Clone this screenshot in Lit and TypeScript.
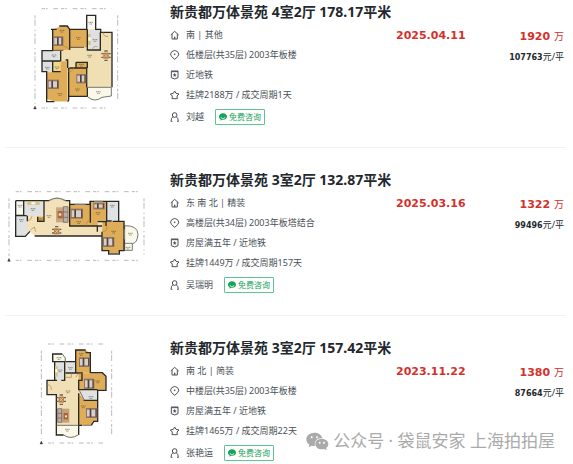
import { LitElement, html, svg, css } from "lit";
import { customElement, property } from "lit/decorators.js";

interface Deal {
  title: string;
  facing: string;
  floor: string;
  tags: string;
  listing: string;
  agent: string;
  date: string;
  total: string;
  unit: string;
  plan: "a" | "b" | "c";
}

const deals: Deal[] = [
  { title: "新贵都万体景苑 4室2厅 178.17平米", facing: "南 | 其他", floor: "低楼层(共35层) 2003年板楼", tags: "近地铁", listing: "挂牌2188万 / 成交周期1天", agent: "刘越", date: "2025.04.11", total: "1920", unit: "107763", plan: "a" },
  { title: "新贵都万体景苑 3室2厅 132.87平米", facing: "东 南 北 | 精装", floor: "高楼层(共34层) 2003年板塔结合", tags: "房屋满五年 / 近地铁", listing: "挂牌1449万 / 成交周期157天", agent: "吴瑞明", date: "2025.03.16", total: "1322", unit: "99496", plan: "b" },
  { title: "新贵都万体景苑 3室2厅 157.42平米", facing: "南 北 | 简装", floor: "中楼层(共35层) 2003年板楼", tags: "房屋满五年 / 近地铁", listing: "挂牌1465万 / 成交周期22天", agent: "张艳运", date: "2023.11.22", total: "1380", unit: "87664", plan: "c" },
];

const icons = {
  home: svg`<path d="M2 15L14 4L26 15M6 12V27H22V12"/><path d="M14 27V20" stroke-width="4"/>`,
  pin: svg`<path d="M14 28L5 20A12 11 0 1 1 23 20Z"/><circle cx="14" cy="13" r="2.5" fill="#4a5057" stroke="none"/>`,
  badge: svg`<path d="M4 3H24V23L14 27L4 23Z"/><path d="M4 5H24"/><path d="M14 9l1.8 3.6 4 .6-2.9 2.8.7 4-3.6-1.9-3.6 1.9.7-4-2.9-2.8 4-.6z" fill="#4a5057" stroke="none"/>`,
  star: svg`<path d="M14 3L18 10L27 12L21 18L22 26H6L7 18L1 12L10 10Z"/>`,
  user: svg`<circle cx="14" cy="9" r="7"/><path d="M9 14Q3 18 3 28M19 14Q25 18 25 28M3 28H7M21 28H25"/>`,
};

const chat = svg`<path d="M12 1C5 1 0 5 0 11c0 4 2 6 5 8l-1 4 5-3h3c7 0 12-4 12-9S19 1 12 1z" fill="#16a35a"/><path d="M6 12a6 5 0 0 0 12 0" fill="none" stroke="#fff" stroke-width="2"/>`;

const bed = (x: number, y: number, w = 28, h = 30) => svg`
  <rect x=${x} y=${y} width=${w} height=${h} fill="#8c7567"/>
  <rect x=${x + 3} y=${y + 5} width=${w - 7} height=${h - 10} fill="#d9cfc8"/>
  <rect x=${x + 11} y=${y + 3} width="5" height=${h - 6} fill="#4c403c"/>
  <rect x=${x + w - 6} y=${y + 3} width="4" height=${h - 6} fill="#5d4d46"/>`;

const mark = (x: number, y: number) => svg`
  <path d="M${x - 7} ${y}h14M${x - 4} ${y + 5}h8" stroke="#4b4335" stroke-width="3" stroke-dasharray="4 1" opacity=".55"/>`;

const table = (x: number, y: number) => svg`
  <rect x=${x - 8} y=${y - 9} width="16" height="18" fill="#b77b42"/>
  <path d="M${x - 14} ${y - 6}h6m16 0h6M${x - 14} ${y + 5}h6m16 0h6M${x - 5} ${y - 14}h10M${x - 5} ${y + 14}h10" stroke="#6c6259" stroke-width="4"/>
  <path d="M${x - 5} ${y - 5}l10 10m0-10l-10 10" stroke="#ece3d3" stroke-width="2"/>`;

const rulers = (x1: number, y1: number, x2: number, y2: number) => svg`
  <path d="M${x1 + 20} ${y1}H${x2 - 18}M${x1 + 20} ${y2}H${x2 - 18}" stroke="#bbb" stroke-width="3" stroke-dasharray="10 3 5 17 14 9"/>
  <path d="M${x1} ${y1 + 20}V${y2 - 12}M${x2} ${y1 + 20}V${y2 - 18}" stroke="#bbb" stroke-width="3" stroke-dasharray="9 4 18 12 4 8"/>
  <path d="M${x1} ${y2 - 6}l-4 9h8z" fill="#333" stroke="#333"/>`;

const plans = {
  a: { box: "15 6 465 330", art: svg`
    ${rulers(105, 26, 353, 324)}
    <path d="M153 88H170L178 77H202L209 88H260V46H287V88H302V97H336V262H334V288Q320 290 306 292Q284 310 263 290H259V289H206V300L203 305H163L140 297V215H126V152H158V88Z" fill="#f0dfb3"/>
    <path d="M158 90L180 79H202L208 88V150H158ZM209 90H261V142H209ZM141 217H158V184H202V304H163L141 297ZM206 204H260V288H206Z" fill="#dfac58"/>
    <path d="M228 187h34v17h-34z" fill="#dfac58"/>
    <path d="M126 153H182V183H158V215H126ZM262 89H301V150H262Z" fill="#dfe0e1"/>
    <path d="M262 47H286V88H262Z" fill="#fbfaf0"/>
    <path d="M159 185h23v30h-23z" fill="#f0d88f"/>
    <path d="M262 262H334V288L306 292Q284 309 262 289Z" fill="#faf9e9"/>
    <path d="M153 88H170M178 78H202L209 88H260V46H287V88H302V97H336V262M262 262V289H206V300L203 305M163 305H140V215H126V152H158V88M209 88V150M262 88V150H301V97M206 204V289M208 204H260V262M228 187H262V204M228 187V204M126 183H182M158 184V215H182M182 152V183M197 180H203V204" fill="none" stroke="#292926" stroke-width="4"/>
    <path d="M209 142H252M158 151H190" stroke="#5e503a" stroke-width="3"/>
    <path d="M262 262H334V288L306 292Q284 309 262 290" fill="none" stroke="#777" stroke-width="3"/>
    <path d="M190 140q12-4 18 10M276 150q4-14 16-10M205 214q14 2 16-10M310 97q0 15 14 12" fill="none" stroke="#b7813a" stroke-width="2"/>
    ${bed(160, 109, 30, 29)}${bed(143, 239, 34, 28)}${bed(229, 222, 30, 28)}
    ${table(318, 167)}
    <rect x="264" y="102" width="8" height="33" fill="#d8c37b"/><rect x="265" y="112" width="7" height="10" fill="#fff"/>
    ${mark(186, 91)}${mark(235, 113)}${mark(285, 119)}${mark(162, 165)}${mark(142, 202)}${mark(171, 201)}${mark(244, 193)}${mark(269, 166)}${mark(180, 281)}${mark(232, 267)}${mark(295, 275)}${mark(272, 67)}` },
  b: { box: "15 0 465 330", art: svg`
    ${rulers(27, 65, 432, 271)}
    <path d="M47 92H147Q171 77 196 92H209V104H270V95H356V154H373V242H358V252H326V242H306V198H104L90 184L76 199H47Z" fill="#f2e1b9"/>
    <path d="M210 104H270V168H210ZM271 96H319V155H293V168H271ZM307 155H372V241H357V251H327V241H307Z" fill="#dfac58"/>
    <path d="M72 94H131V137H72ZM48 137H82V182L76 198H48ZM322 97H355V153H322Z" fill="#dfe1e2"/>
    <path d="M48 94H70V136H48Z" fill="#fbfaf0"/>
    <path d="M113 140H132V154H113Z" fill="#d9a552"/>
    <path d="M374 167Q413 166 414 193Q412 219 397 221V241H374Z" fill="#faf9e9" stroke="#777" stroke-width="3"/>
    <path d="M374 220H398" stroke="#777" stroke-width="3"/>
    <path d="M47 92H147M47 92V199H76L90 184M104 198H306V242H326V252H358V242H372V154H356V94H270V103H209V92H196M71 92V136H48M132 93V154H113V140M82 137V154M48 137H80M209 92V168H292V185M271 96V158M320 96V153H335M293 155H318V168M338 154H372V165M306 185V242M293 168H306" fill="none" stroke="#292926" stroke-width="4"/>
    <path d="M147 92Q171 77 196 92" fill="none" stroke="#777" stroke-width="4"/>
    <path d="M224 103H257M282 94H309M373 178V208M327 252H358" stroke="#8c8c86" stroke-width="3"/>
    <path d="M91 180l12-9 4 14M258 168q0-16 12-14M308 184q13 2 13-14M82 153q12-2 14-14" fill="none" stroke="#b7813a" stroke-width="2"/>
    ${bed(212, 116, 37, 30)}${bed(280, 98, 34, 20)}${bed(309, 201, 34, 30)}
    <rect x="168" y="112" width="37" height="45" fill="#c5a789"/>
    <rect x="173" y="123" width="15" height="22" fill="#b0672e"/><rect x="176" y="130" width="8" height="7" fill="#f1e4c5"/>
    <path d="M190 110H204V157H190Z" fill="#bbb0a7" stroke="#705a50" stroke-width="2"/>
    <path d="M190 126H204M190 142H204" stroke="#705a50" stroke-width="2"/>
    ${table(170, 184)}
    <rect x="82" y="95" width="37" height="10" fill="#d8c37b"/><rect x="94" y="97" width="12" height="6" fill="#fff"/>
    ${mark(60, 106)}${mark(99, 116)}${mark(64, 149)}${mark(121, 147)}${mark(147, 137)}${mark(236, 155)}${mark(294, 128)}${mark(337, 106)}${mark(341, 184)}${mark(391, 190)}${mark(384, 232)}` },
  c: { box: "15 24 465 330", art: svg`
    ${rulers(124, 42, 335, 339)}
    <path d="M158 72H187L196 85V94H226V59H257V68H271V128H307L318 139V180H294V274H276V285H236V314Q211 330 191 315H169V194H141V151H163V95H158Z" fill="#f1e0b6"/>
    <path d="M227 61H257L270 69V128H227ZM236 130H306L317 140V179H236ZM236 188L250 212H292V274H276V285H236Z" fill="#dfac58"/>
    <path d="M164 95H192V151H164ZM198 95H226V129H198ZM239 182H292V211H253Z" fill="#dfe1e2"/>
    <path d="M160 73H187L194 84V94H160ZM170 286H235V315Q211 329 191 315H170Z" fill="#faf9e9"/>
    <path d="M187 72H158V95H164V151H141V194H169V315H191M236 315V190M236 286H246M274 286L281 274H293V181H318V139L307 128H271V68H257M257 60H227V129H246V151H236V179H293M164 95H194V151H184M197 129H226M197 95H226M141 151H171M250 211H292" fill="none" stroke="#292926" stroke-width="4"/>
    <path d="M170 286H235M191 315Q211 330 236 314M187 72L196 84V94M257 60V68M238 181L253 211M247 286H274" fill="none" stroke="#77736a" stroke-width="3"/>
    <path d="M142 164q13 0 12 16M236 200q12-2 14 12M228 142q4-13 17-12M197 142h17v-12" fill="none" stroke="#b7813a" stroke-width="2"/>
    ${bed(237, 82, 33, 29)}${bed(252, 146, 31, 31)}${bed(258, 234, 34, 30)}
    ${table(184, 209)}
    <rect x="181" y="236" width="27" height="42" fill="#c6a17d"/>
    <rect x="191" y="249" width="13" height="19" fill="#aa662f"/><rect x="195" y="256" width="6" height="6" fill="#f1e4c5"/>
    <path d="M173 236H185V277H173Z" fill="#bbb0a7" stroke="#705a50" stroke-width="2"/>
    <path d="M173 250H185M173 264H185" stroke="#705a50" stroke-width="2"/>
    <rect x="165" y="108" width="8" height="32" fill="#d8c37b"/><rect x="166" y="117" width="6" height="10" fill="#fff"/>
    ${mark(177, 83)}${mark(180, 120)}${mark(211, 113)}${mark(244, 71)}${mark(293, 153)}${mark(273, 200)}${mark(204, 183)}${mark(250, 228)}${mark(202, 298)}` },
};

@customElement("deal-row")
class DealRow extends LitElement {
  @property({ attribute: false }) deal!: Deal;

  static styles = css`
    :host {
      display: grid;
      grid-template-columns: 165px minmax(226px, 1fr) 70px 98px;
      align-items: start;
      font: 9px/20px "Noto Sans", "Noto Sans CJK SC", sans-serif;
      color: #4a5057;
      white-space: nowrap;
    }
    .plan { display: block; width: 155px; height: 110px; }
    .title { margin: 0; font-size: 14px; line-height: 20px; font-weight: 700; }
    .title a { color: #23282c; text-decoration: none; }
    .facts { list-style: none; margin: 3px 0 1px; padding: 0; }
    .fact { display: flex; align-items: center; gap: 6px; }
    .icon { width: 10px; height: 10px; flex: none; fill: none; stroke: #4a5057; stroke-width: 3; }
    .agent { display: flex; align-items: center; gap: 6px; height: 22px; }
    .ask {
      display: flex;
      align-items: center;
      gap: 2px;
      height: 16px;
      margin-left: 5px;
      padding: 0 3px;
      border: 1px solid #5cc592;
      border-radius: 1px;
      background: #fff;
      color: #16a35a;
      font: 8px/14px "Noto Sans", "Noto Sans CJK SC", sans-serif;
    }
    .bubble { width: 8px; height: 8px; }
    .date, .price { padding-top: 24px; }
    .date, .total { color: #d3312b; font: 700 11px/20px "DejaVu Sans", sans-serif; }
    .price { text-align: right; }
    .wan { font: 10px/20px "Noto Sans CJK SC", sans-serif; }
    .each { color: #23282c; }
    .each b { font: 700 8px/20px "DejaVu Sans", sans-serif; }
  `;

  render() {
    const d = this.deal;
    const fact = (icon: keyof typeof icons, text: string) => html`
      <li class="fact"><svg class="icon" viewBox="0 0 30 30" aria-hidden="true">${icons[icon]}</svg>${text}</li>`;
    return html`
      <svg class="plan" viewBox=${plans[d.plan].box} role="img" aria-label="户型图">${plans[d.plan].art}</svg>
      <div>
        <h2 class="title"><a href="#">${d.title}</a></h2>
        <ul class="facts">
          ${fact("home", d.facing)}${fact("pin", d.floor)}${fact("badge", d.tags)}${fact("star", d.listing)}
        </ul>
        <div class="agent">
          <svg class="icon" viewBox="0 0 30 30" aria-hidden="true">${icons.user}</svg>
          <span>${d.agent}</span>
          <button class="ask" type="button"><svg class="bubble" viewBox="0 0 24 24" aria-hidden="true">${chat}</svg>免费咨询</button>
        </div>
      </div>
      <div class="date">${d.date}</div>
      <div class="price">
        <div class="total">${d.total} <span class="wan">万</span></div>
        <div class="each"><b>${d.unit}</b>元/平</div>
      </div>`;
  }
}

@customElement("app-root")
class AppRoot extends LitElement {
  static styles = css`
    :host { display: block; position: relative; background: #fff; }
    .list { list-style: none; margin: 0; padding: 0 7px 0 5px; }
    .item { padding: 22px 2px 19px 0; border-bottom: 1px solid #f2f2f2; }
    .item:first-child { padding-top: 2px; }
    .item:last-child { padding-bottom: 0; border-bottom: 0; }
    .mark {
      position: absolute;
      right: 18px;
      bottom: 13px;
      display: flex;
      align-items: center;
      gap: 4px;
      font: 17px/20px "Noto Sans", "Noto Sans CJK SC", sans-serif;
      color: #aaa;
      white-space: nowrap;
      pointer-events: none;
    }
    .logo { width: 23px; height: 19px; }
  `;

  render() {
    return html`
      <ul class="list">
        ${deals.map((d) => html`<li class="item"><deal-row .deal=${d}></deal-row></li>`)}
      </ul>
      <div class="mark">
        <svg class="logo" viewBox="0 0 69 57" aria-hidden="true">
          <path d="M25 2C11 2 1 11 1 22c0 7 3 12 9 16l-2 8 9-5q4 1 10 1C23 27 35 17 49 18 46 8 37 2 25 2z" fill="#aaa"/>
          <path d="M47 20C36 20 28 27 28 36s8 16 19 16q4 0 7-1l8 4-2-7c5-3 7-7 7-12 0-9-9-16-20-16z" fill="#aaa"/>
          <circle cx="17" cy="16" r="3" fill="#fff"/><circle cx="33" cy="16" r="3" fill="#fff"/>
          <circle cx="41" cy="32" r="3" fill="#fff"/><circle cx="54" cy="32" r="3" fill="#fff"/>
        </svg>
        <span>公众号 · 袋鼠安家 上海拍拍屋</span>
      </div>`;
  }
}
